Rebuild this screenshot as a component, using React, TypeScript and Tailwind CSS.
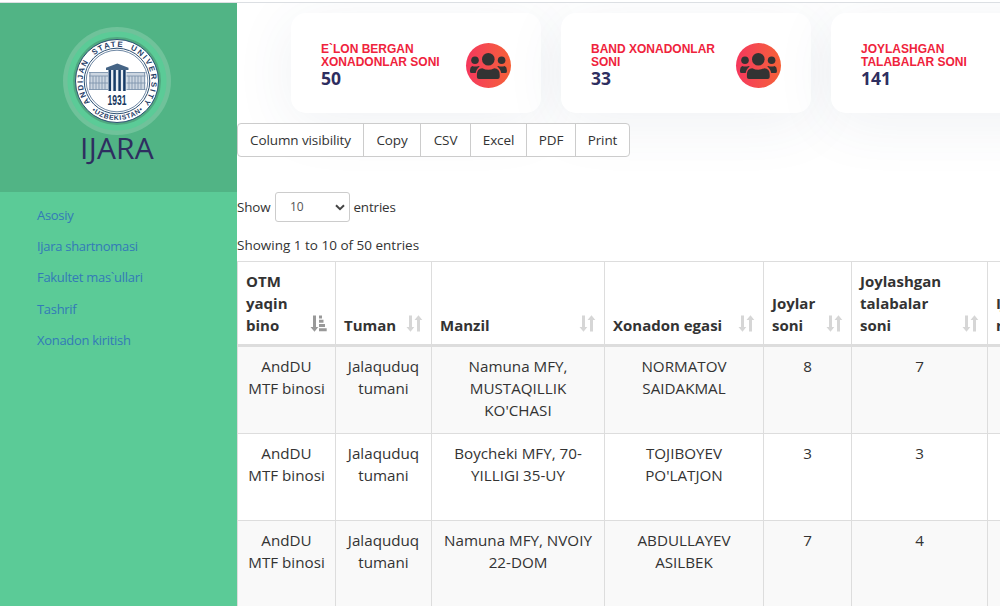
import React from "react";

function Seal() {
  return (
    <svg width="108" height="108" viewBox="0 0 108 108" className="block">
      <defs>
        <path id="seal-top" d="M 27.8 76.2 A 34.3 34.3 0 1 1 80.2 76.2" />
        <path id="seal-bottom" d="M 24.3 79.5 A 39.3 39.3 0 0 0 83.7 79.5" />
      </defs>
      <circle cx="54" cy="54" r="54" fill="#6fc29a" />
      <circle cx="54" cy="54" r="49.5" fill="#5bcb97" />
      <circle cx="54" cy="54" r="44" fill="#50a880" />
      <circle cx="54" cy="54" r="41.5" fill="#fff" stroke="#2c4f72" strokeWidth="1" />
      <circle cx="54" cy="54" r="32.8" fill="none" stroke="#2c4f72" strokeWidth="1" />
      <circle cx="54" cy="54" r="30.8" fill="none" stroke="#7089a5" strokeWidth="1" />
      <g fontFamily="Liberation Sans, sans-serif" fontSize="7.8" fontWeight="700" fill="#1f4068">
        <text><textPath href="#seal-top" textLength="43" startOffset="1">ANDIJAN</textPath></text>
        <text><textPath href="#seal-top" textLength="30" startOffset="53">STATE</textPath></text>
        <text><textPath href="#seal-top" textLength="64" startOffset="91">UNIVERSITY</textPath></text>
        <text fontSize="6.8"><textPath href="#seal-bottom" textLength="56" startOffset="6">•UZBEKISTAN•</textPath></text>
      </g>
      <rect x="26" y="45" width="56.5" height="18" fill="#ccd6e1" />
      <path
        d="M26 45.5H45M63 45.5H82.5M26 49H45M63 49H82.5M26 56H45M63 56H82.5M26 62.5H82.5M27 45V63M30 49V63M33 49V63M36 49V63M39 49V63M42 49V63M66 49V63M69 49V63M72 49V63M75 49V63M78 49V63M81.5 45V63"
        stroke="#7f95ae"
        strokeWidth="0.9"
        fill="none"
      />
      <rect x="45" y="42" width="18.5" height="21.5" fill="#e8edf3" />
      <path d="M43 40.8L54.3 36.6L65.5 40.8V43H43Z" fill="#456485" />
      <path d="M46.8 43V64M51.6 43V64M56.6 43V64M61.4 43V64" stroke="#173b66" strokeWidth="2.5" />
      <text x="54" y="78.2" textAnchor="middle" textLength="19" lengthAdjust="spacingAndGlyphs" fontFamily="Liberation Sans, sans-serif" fontSize="15" fontWeight="700" fill="#17375e">
        1931
      </text>
    </svg>
  );
}

function SortIcon({ active = false }: { active?: boolean }) {
  return (
    <svg width="17" height="17" viewBox="0 0 17 17" className={active ? "text-[#999]" : "text-[#d6d6d6]"}>
      <path d="M3 .5h3v11.5h2.3L4.5 16.8.5 12H3z" fill="currentColor" />
      {active ? (
        <path d="M9 .5h3v3H9zM9 4.7h4.5v3H9zM9 9h6v3H9zM9 13.2h7.7v3H9z" fill="currentColor" />
      ) : (
        <path d="M11 16.5h3V5h2.3L12.5.2 8.5 5H11z" fill="currentColor" />
      )}
    </svg>
  );
}

function PeopleIcon() {
  return (
    <svg width="45" height="45" viewBox="0 0 45 45" fill="#333">
      <circle cx="22.3" cy="16.2" r="6.3" />
      <circle cx="9" cy="17.2" r="3.8" />
      <circle cx="35.6" cy="17.2" r="3.8" />
      <path d="M16.3 25.2q6 3.2 12 0q5.4 0 5.4 6.5v2.2q0 2.1-2.1 2.1H13q-2.1 0-2.1-2.1v-2.2q0-6.5 5.4-6.5z" />
      <path d="M6.2 22.9q3 1.2 6.5.1l1 .5q-3.2 2-4 6.6H5.5q-1.5 0-1.5-1.5v-1.4q0-3.4 2.2-4.3z" />
      <path d="M38.7 22.9q-3 1.2-6.5.1l-1 .5q3.2 2 4 6.6h4.2q1.5 0 1.5-1.5v-1.4q0-3.4-2.2-4.3z" />
    </svg>
  );
}

const links = ["Asosiy", "Ijara shartnomasi", "Fakultet mas`ullari", "Tashrif", "Xonadon kiritish"];

const cards = [
  { lines: ["E`LON BERGAN", "XONADONLAR SONI"], value: "50" },
  { lines: ["BAND XONADONLAR", "SONI"], value: "33" },
  { lines: ["JOYLASHGAN", "TALABALAR SONI"], value: "141" },
];

const buttons = [
  { label: "Column visibility", width: "w-[126px]" },
  { label: "Copy", width: "w-[57px]" },
  { label: "CSV", width: "w-[50px]" },
  { label: "Excel", width: "w-[56px]" },
  { label: "PDF", width: "w-[49px]" },
  { label: "Print", width: "w-[53px]" },
];

const columns = [
  ["OTM", "yaqin", "bino"],
  ["Tuman"],
  ["Manzil"],
  ["Xonadon egasi"],
  ["Joylar", "soni"],
  ["Joylashgan", "talabalar", "soni"],
  ["Ijara", "narxi"],
];

const rows = [
  [["AndDU", "MTF binosi"], ["Jalaquduq", "tumani"], ["Namuna MFY,", "MUSTAQILLIK", "KO'CHASI"], ["NORMATOV", "SAIDAKMAL"], ["8"], ["7"], []],
  [["AndDU", "MTF binosi"], ["Jalaquduq", "tumani"], ["Boycheki MFY, 70-", "YILLIGI 35-UY"], ["TOJIBOYEV", "PO'LATJON"], ["3"], ["3"], []],
  [["AndDU", "MTF binosi"], ["Jalaquduq", "tumani"], ["Namuna MFY, NVOIY", "22-DOM"], ["ABDULLAYEV", "ASILBEK"], ["7"], ["4"], []],
];

const grid = "grid grid-cols-[98px_96px_173px_159px_88px_136px_120px]";

export default function App() {
  return (
    <div className="flex h-[606px] w-[1000px] flex-col overflow-hidden bg-white font-['Open_Sans',sans-serif] text-[#333]">
      <div className="h-[3px] shrink-0 border-b border-[#dcdfe3] bg-white" />
      <div className="flex min-h-0 flex-1">
        <aside className="relative z-10 w-[237px] shrink-0 bg-[#5bcb97]">
          <div className="flex h-[189px] flex-col items-center bg-[#51b485] pt-6 pr-[3px]">
            <Seal />
            <div className="-mt-[3px] text-[30px] leading-[32px] tracking-[0.2px] text-[#2e2e60]">IJARA</div>
          </div>
          <nav className="flex flex-col gap-[9.2px] pt-3 pl-[37px] text-[13px] leading-[22px] tracking-[-0.3px] text-[#337ab7]">
            {links.map((link) => (
              <a key={link}>{link}</a>
            ))}
          </nav>
        </aside>

        <main className="w-[763px] overflow-hidden">
          <div className="flex w-[900px] gap-5 pt-2.5 pl-[54px]">
            {cards.map((card) => (
              <div key={card.value} className="flex h-[100px] w-[250px] shrink-0 items-start justify-between rounded-[15px] bg-white px-[30px] pt-[30px] shadow-[0_10px_60px_rgba(50,80,110,0.08)]">
                <div className="w-[125px]">
                  <div className="font-['Liberation_Sans',sans-serif] text-[12px] leading-[13px] font-bold whitespace-nowrap text-[#ef233c]">
                    {card.lines.map((line) => (
                      <div key={line}>{line}</div>
                    ))}
                  </div>
                  <div className="text-[17.5px] leading-[19px] font-bold text-[#2e2e60]">{card.value}</div>
                </div>
                <div className="size-[45px] shrink-0 rounded-full bg-linear-to-r from-[#f5365c] to-[#f56036]">
                  <PeopleIcon />
                </div>
              </div>
            ))}
          </div>

          <div className="relative mt-2.5 flex h-[34px] w-[393px] overflow-hidden rounded-[4px] border border-[#ccc] bg-white text-[13.5px] leading-[32px] tracking-[-0.1px]">
            {buttons.map((button, index) => (
              <button key={button.label} className={`${button.width} shrink-0 ${index < 5 ? "border-r border-[#ccc]" : ""}`}>
                {button.label}
              </button>
            ))}
          </div>

          <div className="relative mt-[35px] flex h-[30px] items-center text-[13.4px] leading-[20px] tracking-[-0.15px]">
            <span className="w-[38px] pb-px">Show</span>
            <div className="mr-[3.5px] flex h-[30px] w-[75px] items-center justify-between rounded-[3px] border border-[#ccc] bg-white pr-1 pl-[14px] text-[12px] text-[#555]">
              <span>10</span>
              <svg width="10" height="7" viewBox="0 0 10 7">
                <path d="M1 1.2l4 4 4-4" fill="none" stroke="#444" strokeWidth="2" />
              </svg>
            </div>
            <span className="pb-px">entries</span>
          </div>
          <div className="mt-[13px] h-[26px] text-[13.5px] leading-[20px]">Showing 1 to 10 of 50 entries</div>

          <div className="w-[870px] text-[15.2px] leading-[22px]">
            <div className={`${grid} h-[86px] border-t border-b-[3px] border-[#ddd] text-[15px]`}>
              {columns.map((lines, index) => (
                <div key={lines.join(" ")} className="flex items-end justify-between border-l border-[#ddd] pr-2 pb-2 pl-2 font-bold">
                  <div className="whitespace-nowrap">
                    {lines.map((line) => (
                      <div key={line}>{line}</div>
                    ))}
                  </div>
                  <div className="pb-1">
                    <SortIcon active={index === 0} />
                  </div>
                </div>
              ))}
            </div>
            {rows.map((row, rowIndex) => (
              <div key={rowIndex} className={`${grid} h-[87px] border-b border-[#ddd] ${rowIndex % 2 === 0 ? "bg-[#f9f9f9]" : "bg-white"}`}>
                {row.map((lines, index) => (
                  <div key={index} className="border-l border-[#ddd] pt-2 text-center whitespace-nowrap">
                    {lines.map((line) => (
                      <div key={line}>{line}</div>
                    ))}
                  </div>
                ))}
              </div>
            ))}
          </div>
        </main>
      </div>
    </div>
  );
}
